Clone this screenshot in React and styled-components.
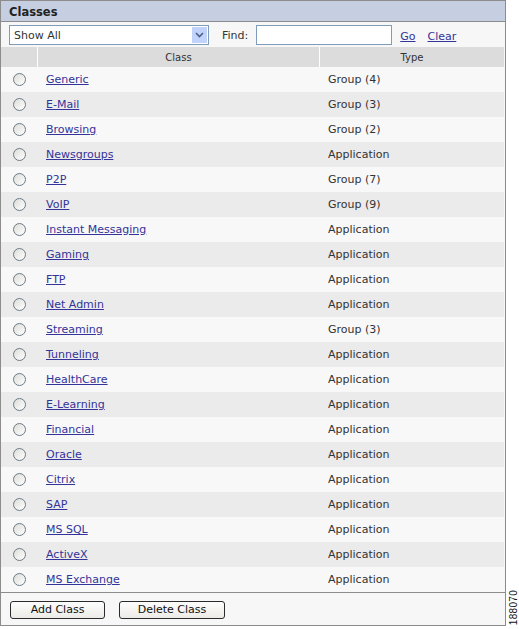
import React from "react";
import styled, { createGlobalStyle } from "styled-components";

const GlobalStyle = createGlobalStyle`
  body {
    margin: 0;
    background: #fff;
    font-family: Verdana, "DejaVu Sans", sans-serif;
  }
`;

const Page = styled.div`
  display: flex;
  align-items: flex-end;
  width: 519px;
  height: 629px;
`;

const Panel = styled.div`
  width: 504px;
  border: 1px solid #8c8c8c;
  align-self: flex-start;
  background: #f7f7f7;
`;

const TitleBar = styled.div`
  height: 20px;
  line-height: 22px;
  padding-left: 8px;
  background: #c6cee1;
  border-bottom: 1px solid #8c8c8c;
  font-size: 11.5px;
  font-weight: bold;
  color: #222;
`;

const Toolbar = styled.div`
  display: flex;
  align-items: center;
  height: 25px;
  padding-left: 8px;
  padding-top: 1px;
  box-sizing: border-box;
  background: #f7f7f7;
  font-size: 11px;
  color: #333;
`;

const Select = styled.div`
  display: flex;
  align-items: center;
  justify-content: space-between;
  width: 194px;
  height: 18px;
  border: 1px solid #7f9db9;
  background: #fff;
  padding-left: 4px;
`;

const SelectArrow = styled.div`
  width: 15px;
  height: 16px;
  margin-right: 1px;
  background: #c1d3fb;
  display: flex;
  align-items: center;
  justify-content: center;
`;

const Label = styled.span`
  margin-left: 13px;
  margin-right: 8px;
`;

const Input = styled.div`
  width: 134px;
  height: 18px;
  border: 1px solid #7f9db9;
  background: #fff;
`;

const ToolLink = styled.a`
  color: #333399;
  text-decoration: underline;
  margin-left: ${(p) => p.$gap}px;
  cursor: pointer;
  position: relative;
  top: 1px;
`;

const Grid = styled.div`
  display: grid;
  grid-template-columns: 36px 282px 1fr;
`;

const HeadCell = styled.div`
  height: 20px;
  line-height: 21px;
  background: #dcdcdc;
  font-size: 10px;
  color: #333;
  text-align: center;
  border-left: ${(p) => (p.$first ? "none" : "1px solid #fff")};
  margin-right: ${(p) => (p.$last ? "1px" : "0")};
`;

const Cell = styled.div`
  height: 25px;
  display: flex;
  align-items: center;
  font-size: 11px;
  color: #333;
  background: ${(p) => (p.$alt ? "#ebebeb" : "#f8f8f8")};
  padding-left: ${(p) => p.$pad}px;
  margin-right: ${(p) => (p.$last ? "1px" : "0")};
`;

const Radio = styled.span`
  width: 13px;
  height: 13px;
  border-radius: 50%;
  border: 1px solid #6d7a86;
  background: linear-gradient(135deg, #dcdcd8, #fff);
  box-sizing: border-box;
  margin-left: 12px;
`;

const ClassLink = styled.a`
  color: #333399;
  text-decoration: underline;
  cursor: pointer;
`;

const Footer = styled.div`
  display: flex;
  align-items: center;
  gap: 14px;
  height: 33px;
  padding-left: 9px;
  padding-top: 1px;
  box-sizing: border-box;
  border-top: 1px solid #8c8c8c;
  background: #f7f7f7;
`;

const Button = styled.button`
  height: 18px;
  width: ${(p) => p.$w}px;
  padding: 0;
  border: 1px solid #2b2b2b;
  border-radius: 3px;
  background: linear-gradient(#fdfdfd, #ecebe6);
  font-family: Verdana, "DejaVu Sans", sans-serif;
  font-size: 11px;
  color: #111;
`;

const SideTag = styled.div`
  writing-mode: vertical-rl;
  transform: rotate(180deg);
  font-family: Arial, "Liberation Sans", sans-serif;
  font-size: 10px;
  color: #111;
  margin-left: 2px;
  margin-bottom: 4px;
  letter-spacing: 0.3px;
`;

const rows = [
  ["Generic", "Group (4)"],
  ["E-Mail", "Group (3)"],
  ["Browsing", "Group (2)"],
  ["Newsgroups", "Application"],
  ["P2P", "Group (7)"],
  ["VoIP", "Group (9)"],
  ["Instant Messaging", "Application"],
  ["Gaming", "Application"],
  ["FTP", "Application"],
  ["Net Admin", "Application"],
  ["Streaming", "Group (3)"],
  ["Tunneling", "Application"],
  ["HealthCare", "Application"],
  ["E-Learning", "Application"],
  ["Financial", "Application"],
  ["Oracle", "Application"],
  ["Citrix", "Application"],
  ["SAP", "Application"],
  ["MS SQL", "Application"],
  ["ActiveX", "Application"],
  ["MS Exchange", "Application"],
];

export default function App() {
  return (
    <Page>
      <GlobalStyle />
      <Panel>
        <TitleBar>Classes</TitleBar>
        <Toolbar>
          <Select>
            <span>Show All</span>
            <SelectArrow>
              <svg width="9" height="6" viewBox="0 0 9 6">
                <path d="M1 1 L4.5 4.5 L8 1" fill="none" stroke="#4d6185" strokeWidth="1.6" />
              </svg>
            </SelectArrow>
          </Select>
          <Label>Find:</Label>
          <Input />
          <ToolLink $gap={8}>Go</ToolLink>
          <ToolLink $gap={12}>Clear</ToolLink>
        </Toolbar>
        <Grid>
          <HeadCell $first />
          <HeadCell>Class</HeadCell>
          <HeadCell $last>Type</HeadCell>
          {rows.map(([name, type], i) => (
            <React.Fragment key={name}>
              <Cell $alt={i % 2 === 1}>
                <Radio />
              </Cell>
              <Cell $alt={i % 2 === 1} $pad={9}>
                <ClassLink>{name}</ClassLink>
              </Cell>
              <Cell $alt={i % 2 === 1} $pad={9} $last>
                {type}
              </Cell>
            </React.Fragment>
          ))}
        </Grid>
        <Footer>
          <Button $w={95}>Add Class</Button>
          <Button $w={106}>Delete Class</Button>
        </Footer>
      </Panel>
      <SideTag>188070</SideTag>
    </Page>
  );
}
